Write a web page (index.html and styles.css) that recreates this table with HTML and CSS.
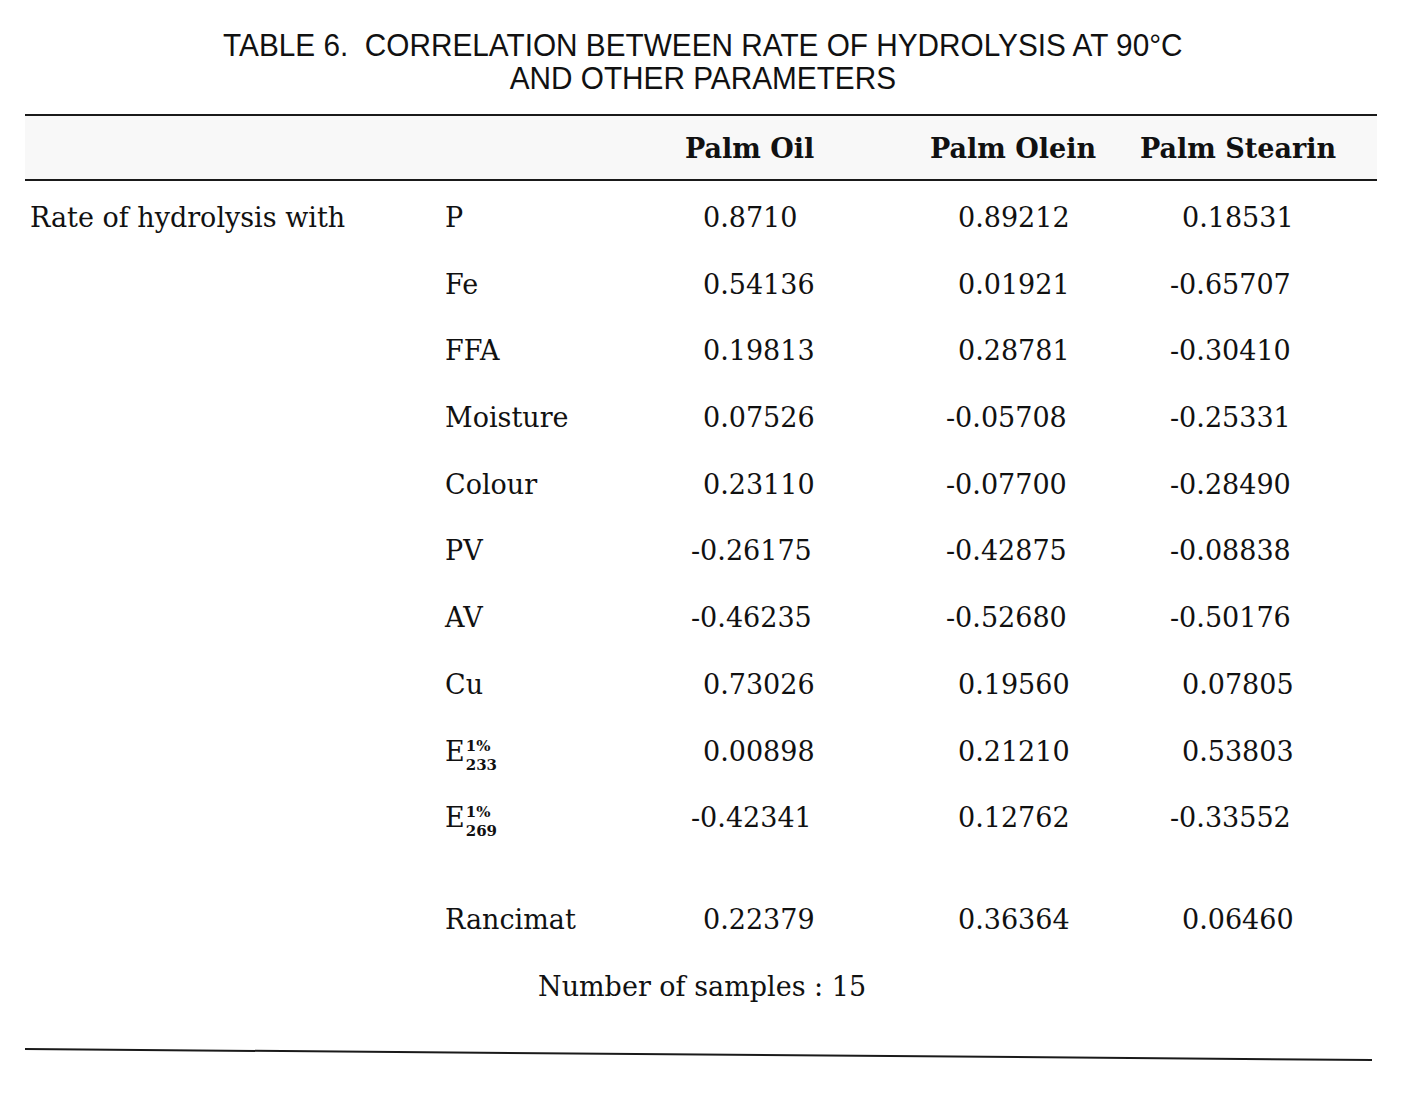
FILE: index.html
```html
<!DOCTYPE html>
<html lang="en">
<head>
  <meta charset="UTF-8">
  <meta name="viewport" content="width=device-width, initial-scale=1.0">
  <title>Table 6 - Correlation between rate of hydrolysis at 90°C and other parameters</title>
  <link rel="stylesheet" href="styles.css">
</head>
<body>

<div class="page">
  <h1 class="title">
    <span class="title-text">TABLE 6.&nbsp; CORRELATION BETWEEN RATE OF HYDROLYSIS AT 90°C<br>AND OTHER PARAMETERS</span>
  </h1>

  <div class="rule"></div>

  <!-- En-tete des colonnes -->
  <div class="head">
    <div></div>
    <div>Palm Oil</div>
    <div>Palm Olein</div>
    <div>Palm Stearin</div>
  </div>

  <div class="rule"></div>

  <div class="grid">
    <div class="label">Rate of hydrolysis with</div>
    <div class="param">P</div>
    <div class="val">0.8710</div>
    <div class="val">0.89212</div>
    <div class="val">0.18531</div>

    <div></div>
    <div class="param">Fe</div>
    <div class="val">0.54136</div>
    <div class="val">0.01921</div>
    <div class="val neg">-0.65707</div>

    <div></div>
    <div class="param">FFA</div>
    <div class="val">0.19813</div>
    <div class="val">0.28781</div>
    <div class="val neg">-0.30410</div>

    <div></div>
    <div class="param">Moisture</div>
    <div class="val">0.07526</div>
    <div class="val neg">-0.05708</div>
    <div class="val neg">-0.25331</div>

    <div></div>
    <div class="param">Colour</div>
    <div class="val">0.23110</div>
    <div class="val neg">-0.07700</div>
    <div class="val neg">-0.28490</div>

    <div></div>
    <div class="param">PV</div>
    <div class="val neg">-0.26175</div>
    <div class="val neg">-0.42875</div>
    <div class="val neg">-0.08838</div>

    <div></div>
    <div class="param">AV</div>
    <div class="val neg">-0.46235</div>
    <div class="val neg">-0.52680</div>
    <div class="val neg">-0.50176</div>

    <div></div>
    <div class="param">Cu</div>
    <div class="val">0.73026</div>
    <div class="val">0.19560</div>
    <div class="val">0.07805</div>

    <div></div>
    <div class="param">E<span class="idx"><span class="sup">1%</span><span class="sub">233</span></span></div>
    <div class="val">0.00898</div>
    <div class="val">0.21210</div>
    <div class="val">0.53803</div>

    <div></div>
    <div class="param">E<span class="idx"><span class="sup">1%</span><span class="sub">269</span></span></div>
    <div class="val neg">-0.42341</div>
    <div class="val">0.12762</div>
    <div class="val neg">-0.33552</div>

    <div class="gap"></div>
    <div class="param">Rancimat</div>
    <div class="val">0.22379</div>
    <div class="val">0.36364</div>
    <div class="val">0.06460</div>

    <div class="note">Number of samples : 15</div>
  </div>

  <!-- Trait du bas, legerement incline comme sur le scan -->
  <svg class="bottom" width="1347" height="16" viewBox="0 0 1347 16">
    <line x1="0" y1="2" x2="1347" y2="13" stroke="#1a1a1a" stroke-width="2"/>
  </svg>
</div>

</body>
</html>
```

FILE: styles.css
```css
body {
  margin: 0;
  background-color: #ffffff;
  color: #111;
  font-family: "DejaVu Serif", "Liberation Serif", serif;
}
.page {
  width: 1352px;
  margin-left: 25px;
}
.title {
  margin: 29px 0 0 -25px;
  width: 1406px;
  text-align: center;
  font-family: "Liberation Sans", Arial, sans-serif;
  font-weight: normal;
  font-size: 32px;
  line-height: 33px;
}
.title-text {
  display: inline-block;
  transform: scaleX(0.93);
}
.rule {
  height: 2px;
  background-color: #1a1a1a;
  margin-top: 19px;
}
.head {
  display: grid;
  grid-template-columns: 660px 245px 210px 1fr;
  padding: 17px 0 14px 0;
  font-weight: bold;
  font-size: 27px;
  line-height: 32px;
  background-color: #f8f8f8;
}
.head + .rule {
  margin-top: 0;
}
.grid {
  display: grid;
  grid-template-columns: 415px 258px 255px 224px 1fr;
  grid-auto-rows: 66.7px;
  padding: 4px 0 0 5px;
  font-size: 27px;
  line-height: 66.7px;
}
.label, .param {
  white-space: nowrap;
}
.val.neg {
  margin-left: -12px;
}
.idx {
  display: inline-flex;
  flex-direction: column;
  vertical-align: 10px;
  margin-left: 1px;
  line-height: 19px;
}
.sup {
  font-size: 15px;
  font-weight: bold;
}
.sub {
  font-size: 15px;
  font-weight: bold;
}
.gap, .gap ~ div {
  position: relative;
  top: 35px;
}
.note {
  grid-column: 2 / -1;
  padding-left: 93px;
}
.bottom {
  display: block;
  margin-top: 62px;
}
```
